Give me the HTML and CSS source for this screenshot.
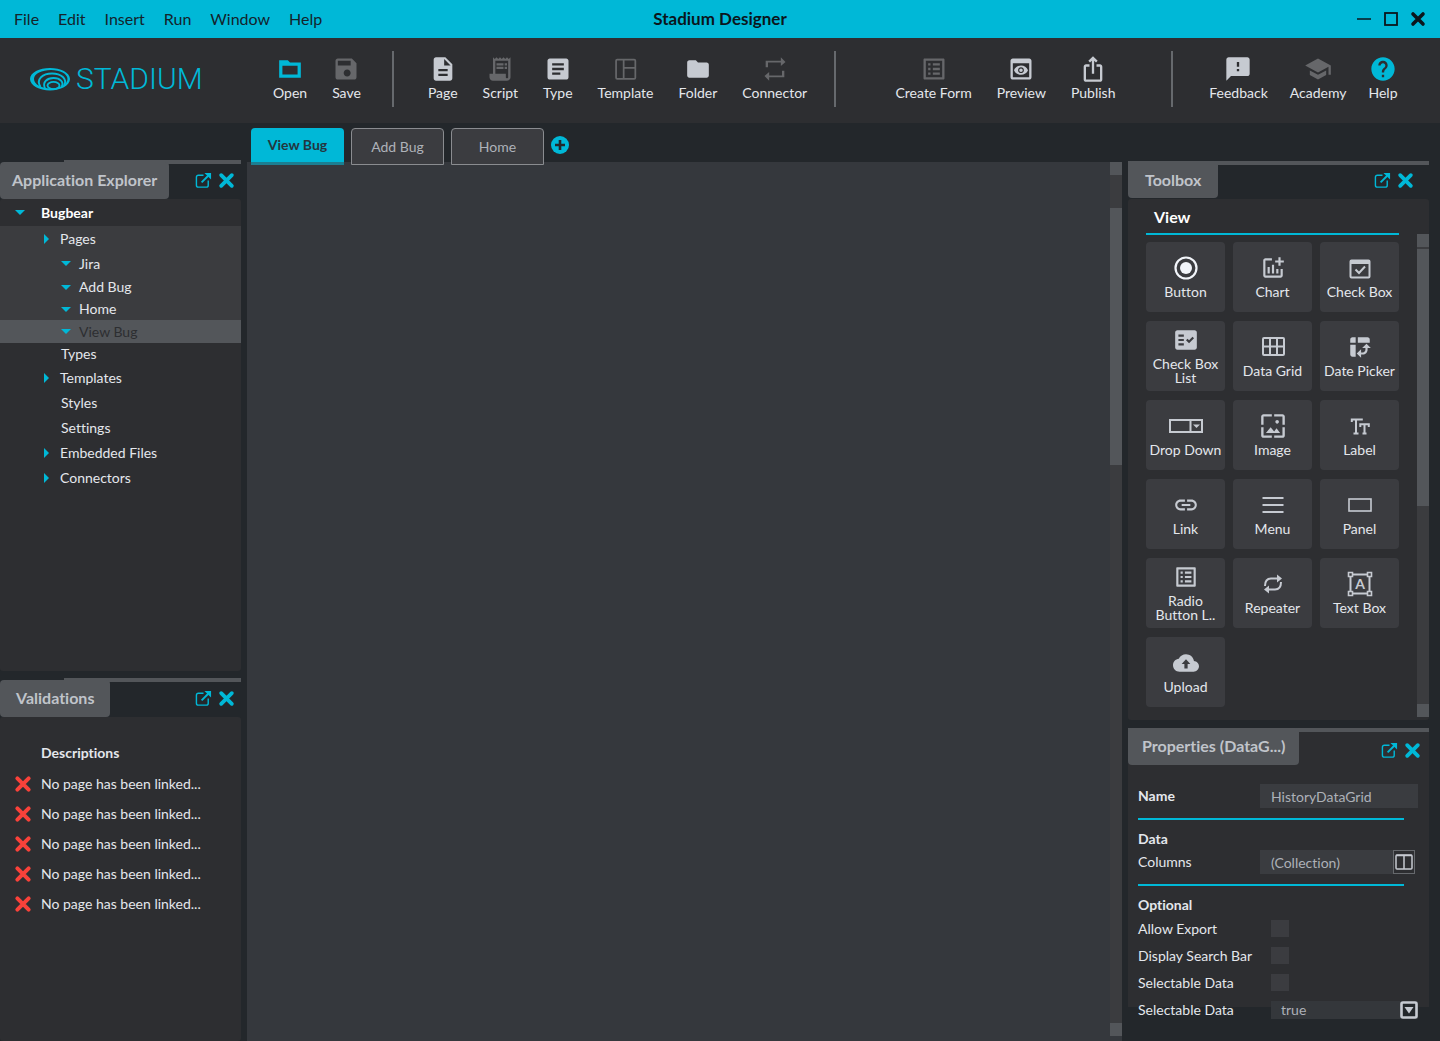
FILE: index.html
```
<!DOCTYPE html>
<html lang="en">
<head>
    <meta charset="UTF-8">
    <meta name="viewport" content="width=device-width, initial-scale=1.0">
    <title>Stadium Designer</title>
    <link rel="stylesheet" href="styles.css">
</head>
<body>

    <!-- Icons that are used more than once -->
    <svg class="sprite" aria-hidden="true">
        <symbol id="close" viewBox="0 0 16 16">
            <path d="M3 3l10 10M13 3L3 13" fill="none" stroke="currentColor" stroke-width="3.6" stroke-linecap="round"/>
        </symbol>
        <symbol id="popout" viewBox="0 0 18 18">
            <path d="M9 3.500H3.500a2 2 0 0 0-2 2v8.500a2 2 0 0 0 2 2h8.500a2 2 0 0 0 2-2V9" fill="none" stroke="currentColor" stroke-width="1.500"/>
            <path d="M7 11l7-7" fill="none" stroke="currentColor" stroke-width="2"/>
            <path d="M10 1h7v7z" fill="currentColor"/>
        </symbol>
        <symbol id="list" viewBox="0 0 24 24">
            <path d="M19 5v14H5V5h14m1.100-2H3.900c-.5 0-.9.4-.9.9v16.200c0 .4.4.9.9.9h16.200c.4 0 .9-.5.9-.9V3.900c0-.5-.5-.9-.9-.9zM11 7h6v2h-6zM11 11h6v2h-6zM11 15h6v2h-6zM7 7h2v2H7zM7 11h2v2H7zM7 15h2v2H7z" fill="currentColor"/>
        </symbol>
    </svg>

    <header class="titlebar">
        <nav class="menu">
            <button>File</button>
            <button>Edit</button>
            <button>Insert</button>
            <button>Run</button>
            <button>Window</button>
            <button>Help</button>
        </nav>
        <h1>Stadium Designer</h1>
        <div class="window-buttons">
            <button aria-label="Minimize"><svg viewBox="0 0 16 16"><path d="M1 8h14" stroke="currentColor" stroke-width="1.500"/></svg></button>
            <button aria-label="Maximize"><svg viewBox="0 0 16 16"><rect x="2" y="2" width="12" height="12" fill="none" stroke="currentColor" stroke-width="1.800"/></svg></button>
            <button aria-label="Close"><svg><use href="#close"/></svg></button>
        </div>
    </header>

    <div class="toolbar">
        <a class="logo" href="#">
            <svg viewBox="0 0 40 24" aria-hidden="true">
                <path d="M20 1C9.500 1 0 5.500 0 12s9.500 11.500 20 11.500S40 18.500 40 12 30.500 1 20 1zm1 2c9 0 16.500 3.800 16.500 9S30 21.500 21 21.500 4 17.500 4 12 12 3 21 3z" fill-rule="evenodd"/>
                <g fill="none" stroke="currentColor" stroke-width="1.900">
                    <path d="M10.500 20C5.500 12 13 6.500 22 6.500S38 12 34 18.500"/>
                    <path d="M15 21.500C12 15 17 11 23.500 11S34.500 15 31.500 20"/>
                    <ellipse cx="23.500" cy="18.500" rx="6" ry="3.600"/>
                </g>
            </svg>
            <span>STADIUM</span>
        </a>
        <div class="tool-group">
            <button class="tool"><svg class="small cyan" viewBox="0 0 24 24"><path d="M20 6h-8l-2-2H2v16h20V6zm-2 11H5V9h14v8z"/></svg>Open</button>
            <button class="tool"><svg class="dim" viewBox="0 0 24 24"><path d="M17 3H5c-1.110 0-2 .9-2 2v14c0 1.100.89 2 2 2h14c1.100 0 2-.9 2-2V7l-4-4zm-4 15.500c-1.660 0-3-1.340-3-3s1.340-3 3-3 3 1.340 3 3-1.340 3-3 3zm3-9.500H5V5h11v4z"/></svg>Save</button>
        </div>
        <div class="tool-group wide">
            <button class="tool"><svg viewBox="0 0 24 24"><path d="M14 2H6c-1.100 0-2 .9-2 2v16c0 1.100.9 2 2 2h12c1.100 0 2-.9 2-2V8l-6-6zm2 16H8v-2h8v2zm0-4H8v-2h8v2zm-3-5V3.500L18.500 9H13z"/></svg>Page</button>
            <button class="tool"><svg class="dim" viewBox="0 0 24 24"><path d="M19.500 3.500L18 2l-1.500 1.500L15 2l-1.500 1.500L12 2l-1.500 1.500L9 2 7.500 3.500 6 2v14H3v3c0 1.660 1.340 3 3 3h12c1.660 0 3-1.340 3-3V2l-1.500 1.500zM19 19c0 .55-.45 1-1 1s-1-.45-1-1v-3H8V5h11v14z"/><path d="M9 7h6v2H9zM16 7h2v2h-2zM9 10h6v2H9zM16 10h2v2h-2z"/></svg>Script</button>
            <button class="tool"><svg viewBox="0 0 24 24"><path d="M19 3H5c-1.100 0-2 .9-2 2v14c0 1.100.9 2 2 2h14c1.100 0 2-.9 2-2V5c0-1.100-.9-2-2-2zm-5 14H7v-2h7v2zm3-4H7v-2h10v2zm0-4H7V7h10v2z"/></svg>Type</button>
            <button class="tool"><svg class="dim line" viewBox="0 0 24 24"><rect x="3.500" y="4" width="16.500" height="16.500" rx="1"/><path d="M10 4v16.500M10 11h10"/></svg>Template</button>
            <button class="tool"><svg class="small" viewBox="0 0 24 24"><path d="M10 4H4c-1.100 0-2 .9-2 2v12c0 1.100.9 2 2 2h16c1.100 0 2-.9 2-2V8c0-1.100-.9-2-2-2h-8l-2-2z"/></svg>Folder</button>
            <button class="tool"><svg class="dim" viewBox="0 0 24 24"><path d="M6 6.500h11v3l4-3.500-4-4v3H4V10.500h2zM18 17.500H7v-3L3 18l4 4v-3h13v-5.500h-2z"/></svg>Connector</button>
        </div>
        <div class="tool-group page">
            <button class="tool"><svg class="dim"><use href="#list"/></svg>Create Form</button>
            <button class="tool"><svg viewBox="0 0 24 24"><path d="M19 3H5c-1.110 0-2 .9-2 2v14c0 1.100.89 2 2 2h14c1.100 0 2-.9 2-2V5c0-1.100-.89-2-2-2zm0 16H5V7h14v12zm-5.500-6c0 .83-.67 1.500-1.500 1.500s-1.500-.67-1.500-1.500.67-1.500 1.500-1.500 1.500.67 1.500 1.500zM12 9c-2.730 0-5.060 1.660-6 4 .94 2.340 3.270 4 6 4s5.060-1.660 6-4c-.94-2.340-3.270-4-6-4zm0 6.500c-1.380 0-2.500-1.120-2.500-2.500s1.120-2.500 2.500-2.500 2.500 1.120 2.500 2.500-1.120 2.500-2.500 2.500z"/></svg>Preview</button>
            <button class="tool"><svg viewBox="0 0 24 24"><path d="M16 5l-1.420 1.420-1.590-1.590V16h-1.980V4.830L9.420 6.420 8 5l4-4 4 4zm4 5v11c0 1.100-.9 2-2 2H6c-1.110 0-2-.9-2-2V10c0-1.110.89-2 2-2h3v2H6v11h12V10h-3V8h3c1.100 0 2 .89 2 2z"/></svg>Publish</button>
        </div>
        <div class="tool-group support">
            <button class="tool"><svg viewBox="0 0 24 24"><path d="M20 2H4c-1.100 0-2 .9-2 2v18l4-4h14c1.100 0 2-.9 2-2V4c0-1.100-.9-2-2-2zm-7 12h-2v-2h2v2zm0-4h-2V6h2v4z"/></svg>Feedback</button>
            <button class="tool"><svg class="dim" viewBox="0 0 24 24"><path d="M5 13.180v4L12 21l7-3.820v-4L12 17l-7-3.820zM12 3L1 9l11 6 9-4.910V17h2V9L12 3z"/></svg>Academy</button>
            <button class="tool"><svg class="cyan" viewBox="0 0 24 24"><path d="M12 2C6.480 2 2 6.480 2 12s4.480 10 10 10 10-4.480 10-10S17.520 2 12 2zm1 17h-2v-2h2v2zm2.070-7.750l-.9.92C13.450 12.900 13 13.500 13 15h-2v-.5c0-1.100.45-2.100 1.170-2.830l1.240-1.260c.37-.36.59-.86.59-1.410 0-1.100-.9-2-2-2s-2 .9-2 2H8c0-2.210 1.790-4 4-4s4 1.790 4 4c0 .88-.36 1.680-.93 2.250z"/></svg>Help</button>
        </div>
    </div>

    <main class="workspace">
        <aside class="side left">
            <section class="panel explorer">
                <div class="panel-head">
                    <h2>Application Explorer</h2>
                    <div class="panel-buttons">
                        <button aria-label="Pop out"><svg class="popout"><use href="#popout"/></svg></button>
                        <button aria-label="Close panel"><svg><use href="#close"/></svg></button>
                    </div>
                </div>
                <div class="panel-body">
                    <ul class="tree">
                        <li><button class="row root open">Bugbear</button>
                            <ul>
                                <li class="expanded"><button class="row closed">Pages</button>
                                    <ul>
                                        <li><button class="row leaf open">Jira</button></li>
                                        <li><button class="row leaf open tight">Add Bug</button></li>
                                        <li><button class="row leaf open tight">Home</button></li>
                                        <li><button class="row leaf open selected">View Bug</button></li>
                                    </ul>
                                </li>
                                <li><button class="row tight">Types</button></li>
                                <li><button class="row closed">Templates</button></li>
                                <li><button class="row">Styles</button></li>
                                <li><button class="row">Settings</button></li>
                                <li><button class="row closed">Embedded Files</button></li>
                                <li><button class="row closed">Connectors</button></li>
                            </ul>
                        </li>
                    </ul>
                </div>
            </section>

            <section class="panel validations">
                <div class="panel-head">
                    <h2>Validations</h2>
                    <div class="panel-buttons">
                        <button aria-label="Pop out"><svg class="popout"><use href="#popout"/></svg></button>
                        <button aria-label="Close panel"><svg><use href="#close"/></svg></button>
                    </div>
                </div>
                <div class="panel-body">
                    <h3>Descriptions</h3>
                    <ul class="errors">
                        <li><svg aria-hidden="true"><use href="#close"/></svg>No page has been linked...</li>
                        <li><svg aria-hidden="true"><use href="#close"/></svg>No page has been linked...</li>
                        <li><svg aria-hidden="true"><use href="#close"/></svg>No page has been linked...</li>
                        <li><svg aria-hidden="true"><use href="#close"/></svg>No page has been linked...</li>
                        <li><svg aria-hidden="true"><use href="#close"/></svg>No page has been linked...</li>
                    </ul>
                </div>
            </section>
        </aside>

        <section class="editor">
            <div class="tabs">
                <button class="tab active">View Bug</button>
                <button class="tab">Add Bug</button>
                <button class="tab">Home</button>
                <button class="add-tab" aria-label="New tab"><svg viewBox="0 0 18 18"><circle cx="9" cy="9" r="9" fill="currentColor"/><path d="M9 4v10M4 9h10" stroke="#23272b" stroke-width="2.600"/></svg></button>
            </div>
            <div class="canvas">
                <div class="scrollbar"><span class="arrow"></span><span class="thumb"></span><span class="arrow end"></span></div>
            </div>
        </section>

        <aside class="side right">
            <section class="panel toolbox">
                <div class="panel-head">
                    <h2>Toolbox</h2>
                    <div class="panel-buttons">
                        <button aria-label="Pop out"><svg class="popout"><use href="#popout"/></svg></button>
                        <button aria-label="Close panel"><svg><use href="#close"/></svg></button>
                    </div>
                </div>
                <div class="panel-body">
                    <div class="controls">
                        <h3>View</h3>
                        <div class="tiles">
                            <button class="tile bright"><svg class="line" viewBox="0 0 26 26"><circle cx="13" cy="13" r="10.500" stroke-width="2.200"/><circle cx="13" cy="13" r="6" fill="currentColor" stroke="none"/></svg>Button</button>
                            <button class="tile"><svg viewBox="0 0 24 24"><path d="M22 5v2h-3v3h-2V7h-3V5h3V2h2v3h3zm-3 14H5V5h6V3H5c-1.100 0-2 .9-2 2v14c0 1.100.9 2 2 2h14c1.100 0 2-.9 2-2v-6h-2v6zm-4-6v4h2v-4h-2zm-4 4h2V9h-2v8zm-2 0v-6H7v6h2z"/></svg>Chart</button>
                            <button class="tile"><svg class="line" viewBox="0 0 26 26"><rect x="3.500" y="5.500" width="19" height="17" rx="1"/><path d="M3 7h20" stroke-width="4"/><path d="M8.500 14.500l3.500 3.500 6-6.500"/></svg>Check Box</button>
                            <button class="tile"><svg viewBox="0 0 24 24"><path d="M20 3H4c-1.100 0-2 .9-2 2v14c0 1.100.9 2 2 2h16c1.100 0 2-.9 2-2V5c0-1.100-.9-2-2-2zM10 17H5v-2h5v2zm0-4H5v-2h5v2zm0-4H5V7h5v2zm4.820 6L12 12.160l1.410-1.410 1.410 1.420L17.990 9l1.420 1.420L14.820 15z"/></svg>Check Box List</button>
                            <button class="tile"><svg class="line" viewBox="0 0 26 26"><rect x="3" y="4" width="21" height="17" rx="1"/><path d="M10 4v17M17 4v17M3 12.500h21"/></svg>Data Grid</button>
                            <button class="tile"><svg viewBox="0 0 24 24"><path d="M10 8h11V5c0-1.100-.9-2-2-2h-9v5zM3 8h5V3H5c-1.100 0-2 .9-2 2v3zm2 13h3V10H3v9c0 1.100.9 2 2 2zm8 1l-4-4 4-4zm1-9l4-4 4 4zm.58 6H13v-2h1.580c1.330 0 2.420-1.080 2.420-2.420V13h2v1.580c0 2.440-1.980 4.420-4.420 4.420z"/></svg>Date Picker</button>
                            <button class="tile"><svg class="line broad" viewBox="0 0 36 26"><path d="M2 7h32v12H2zM22.500 7v12"/><path d="M25 11.500h7L28.500 15z" fill="currentColor" stroke="none"/></svg>Drop Down</button>
                            <button class="tile"><svg viewBox="1 1 22 22"><path d="M4 4h7V2H4c-1.100 0-2 .9-2 2v7h2V4zm6 9l-4 5h12l-3-4-2.030 2.710L10 13zm7-4.500c0-.83-.67-1.500-1.500-1.500S14 7.670 14 8.500s.67 1.500 1.500 1.500S17 9.330 17 8.500zM20 2h-7v2h7v7h2V4c0-1.100-.9-2-2-2zm0 18h-7v2h7c1.100 0 2-.9 2-2v-7h-2v7zM4 13H2v7c0 1.100.9 2 2 2h7v-2H4v-7z"/></svg>Image</button>
                            <button class="tile"><svg class="line" viewBox="0 0 26 26"><path d="M4.800 9V6.500h11M9 6.500v14M6.500 20.500h5M13.300 14v-2.700h8.500V14M17.500 11.300v9.200M15.500 20.500h4"/></svg>Label</button>
                            <button class="tile"><svg viewBox="0 0 24 24"><path d="M3.900 12c0-1.710 1.390-3.100 3.100-3.100h4V7H7c-2.760 0-5 2.240-5 5s2.240 5 5 5h4v-1.900H7c-1.710 0-3.100-1.390-3.100-3.100zM8 13h8v-2H8v2zm9-6h-4v1.900h4c1.710 0 3.100 1.390 3.100 3.100s-1.390 3.100-3.100 3.100h-4V17h4c2.760 0 5-2.240 5-5s-2.240-5-5-5z"/></svg>Link</button>
                            <button class="tile"><svg class="line" viewBox="0 0 26 26"><path d="M2.500 6h21M2.500 13h21M2.500 20h21"/></svg>Menu</button>
                            <button class="tile"><svg class="line" viewBox="0 0 26 26"><rect x="2" y="7" width="22" height="12" stroke-width="1.600"/></svg>Panel</button>
                            <button class="tile"><svg><use href="#list"/></svg>Radio Button L..</button>
                            <button class="tile"><svg class="line" viewBox="0 0 26 26"><path d="M5 15c0-5 2-7.500 6-7.500h8M21 11c0 5-2 7.500-6 7.500H7"/><path d="M17 3.500l5 4-5 4zM9 14.500l-5 4 5 4z" fill="currentColor" stroke="none"/></svg>Repeater</button>
                            <button class="tile"><svg class="line" viewBox="0 0 26 26"><path d="M5 3.500h16M5 22.500h16M3.500 5v16M22.500 5v16"/><path d="M1.500 1.500h4v4h-4zM20.500 1.500h4v4h-4zM1.500 20.500h4v4h-4zM20.500 20.500h4v4h-4z" class="knob"/><text x="13" y="18" text-anchor="middle">A</text></svg>Text Box</button>
                            <button class="tile"><svg viewBox="0 0 24 24"><path d="M19.350 10.040C18.670 6.590 15.640 4 12 4 9.110 4 6.600 5.640 5.350 8.040 2.340 8.360 0 10.910 0 14c0 3.310 2.690 6 6 6h13c2.760 0 5-2.240 5-5 0-2.640-2.050-4.780-4.650-4.960zM13.500 13v4h-3v-4H8l4-4.500 4 4.500z"/></svg>Upload</button>
                        </div>
                    </div>
                    <div class="scrollbar"><span class="arrow"></span><span class="thumb"></span><span class="arrow end"></span></div>
                </div>
            </section>

            <section class="panel properties">
                <div class="panel-head">
                    <h2>Properties (DataG...)</h2>
                    <div class="panel-buttons">
                        <button aria-label="Pop out"><svg class="popout"><use href="#popout"/></svg></button>
                        <button aria-label="Close panel"><svg><use href="#close"/></svg></button>
                    </div>
                </div>
                <form class="props">
                    <div class="prop name">
                        <label for="name"><b>Name</b></label>
                        <input type="text" id="name" value="HistoryDataGrid">
                    </div>
                    <hr>
                    <h3>Data</h3>
                    <div class="prop columns">
                        <label for="columns">Columns</label>
                        <input type="text" id="columns" value="(Collection)">
                        <button type="button" aria-label="Edit columns"><svg class="line" viewBox="0 0 18 16"><rect x="1" y="1" width="16" height="14" rx="1"/><path d="M9 1v14M1 1.500h16"/></svg></button>
                    </div>
                    <hr>
                    <h3>Optional</h3>
                    <div class="prop option">
                        <label for="export">Allow Export</label>
                        <input type="checkbox" id="export">
                    </div>
                    <div class="prop option">
                        <label for="search">Display Search Bar</label>
                        <input type="checkbox" id="search">
                    </div>
                    <div class="prop option">
                        <label for="selectable">Selectable Data</label>
                        <input type="checkbox" id="selectable">
                    </div>
                    <div class="prop option">
                        <label for="selectable-value">Selectable Data</label>
                        <div class="select">
                            <select id="selectable-value">
                                <option>true</option>
                                <option>false</option>
                            </select>
                            <svg viewBox="0 0 18 18" aria-hidden="true"><rect x="1.500" y="1.500" width="15" height="15" rx="1.500" fill="#23272b" stroke="currentColor" stroke-width="2.600"/><path d="M4.500 6h9L9 12.500z" fill="currentColor"/></svg>
                        </div>
                    </div>
                </form>
            </section>
        </aside>
    </main>

</body>
</html>
```
FILE: styles.css
```
*, *::before {
    box-sizing: border-box;
}
body {
    display: flex;
    flex-direction: column;
    min-height: 100vh;
    margin: 0;
    background-color: #23272b;
    color: #e4e7ec;
    font-family: Muli, Lato, "Open Sans", sans-serif;
    font-size: 14px;
    font-variant-ligatures: none;
    line-height: 20px;
}
h1, h2, h3, ul {
    margin: 0;
    padding: 0;
}
ul {
    list-style: none;
}
button {
    padding: 0;
    border: none;
    background: none;
    color: inherit;
    font: inherit;
    font-variant-ligatures: none;
    cursor: pointer;
}
svg {
    display: block;
    fill: currentColor;
}
.sprite {
    position: absolute;
    width: 0;
    height: 0;
}
.line {
    fill: none;
    stroke: currentColor;
    stroke-width: 2;
}

/* Title bar */
.titlebar {
    display: grid;
    grid-template-columns: 1fr auto 1fr;
    align-items: center;
    height: 38px;
    padding: 0 14px;
    background-color: #00b8d7;
    color: #14232b;
}
.titlebar h1 {
    font-size: 17px;
    color: #0b161c;
}
.menu {
    display: flex;
    gap: 19px;
    font-size: 16px;
}
.window-buttons {
    display: flex;
    justify-content: flex-end;
    gap: 11px;
    color: #0b161c;
}
.window-buttons svg {
    width: 16px;
    height: 16px;
}

/* Toolbar */
.toolbar {
    display: grid;
    grid-template-columns: 247px 147fr 442fr 338fr 267fr;
    align-items: center;
    height: 85px;
    padding-bottom: 4px;
    background-color: #2d2e31;
}
.logo {
    display: flex;
    align-items: center;
    gap: 6px;
    padding-left: 30px;
    color: #00b8d7;
    font-family: Roboto, sans-serif;
    font-size: 30px;
    font-weight: 300;
    text-decoration: none;
}
.logo svg {
    width: 40px;
    height: 24px;
}
.tool-group {
    display: flex;
    gap: 25px;
    height: 56px;
    padding-left: 26px;
    border-right: 2px solid #66696d;
}
.tool-group.wide {
    padding-left: 34px;
}
.tool-group.page {
    padding-left: 60px;
}
.tool-group.support {
    gap: 22px;
    padding-left: 36px;
    border-right: none;
}
.tool {
    display: flex;
    flex-direction: column;
    align-items: center;
    padding-top: 4px;
    white-space: nowrap;
}
.tool svg {
    width: 28px;
    height: 28px;
    color: #c6cad1;
}
.tool svg.small {
    width: 26px;
}
.tool svg.dim {
    color: #66676a;
}
.tool svg.cyan {
    color: #00b8d7;
}
.tool svg.line {
    stroke-width: 1.5;
}

/* Workspace */
.workspace {
    flex: 1;
    display: grid;
    grid-template-columns: 241px 1fr 301px;
    column-gap: 6px;
    padding-right: 11px;
}
.side {
    display: flex;
    flex-direction: column;
    gap: 7px;
    padding-top: 38px;
}
.side.left {
    padding-top: 37px;
}
.panel {
    display: flex;
    flex-direction: column;
}
.panel-head {
    display: flex;
    justify-content: space-between;
    align-items: flex-start;
    height: 38px;
    background: linear-gradient(#53565a, #53565a) 0 0 / 100% 4px no-repeat;
}
.left .panel-head {
    height: 39px;
    background-position: 64px 0;
    padding-top: 2px;
}
.panel-head h2 {
    height: 37px;
    padding: 8px 12px;
    border-radius: 4px;
    background-color: #53565a;
    color: #c0c4ca;
    font-size: 16px;
    line-height: 19px;
}
.validations h2 {
    padding: 8px 16px;
}
.toolbox h2 {
    padding: 9px 17px;
}
.properties h2 {
    padding: 8px 14px;
}
.panel-buttons {
    display: flex;
    align-items: center;
    gap: 6px;
    padding: 10px 6px 0 0;
    color: #00b8d7;
}
.right .panel-buttons {
    padding: 11px 15px 0 0;
}
.right .properties .panel-buttons {
    padding: 14px 8px 0 0;
}
.panel-buttons svg {
    width: 17px;
    height: 17px;
}
.panel-body {
    flex: 1;
    border-radius: 3px;
    background-color: #2d2e31;
}

/* Application explorer */
.explorer {
    flex: 510 0 0;
}
.validations {
    flex: 363 0 0;
}
.row {
    display: flex;
    align-items: center;
    width: 100%;
    height: 25px;
    padding-left: 44px;
}
.row::before {
    content: "";
    width: 17px;
}
.row.closed::before {
    width: 5px;
    margin-right: 11px;
    border: solid transparent;
    border-width: 5px 0 5px 5px;
    border-left-color: #00b8d7;
}
.row.open::before {
    width: 10px;
    margin-right: 8px;
    border: solid transparent;
    border-width: 5px 5px 0;
    border-top-color: #00b8d7;
}
.row.root {
    height: 27px;
    padding-left: 15px;
    color: #ffffff;
    font-weight: bold;
}
.row.root::before {
    margin-right: 16px;
}
.row.leaf {
    padding-left: 61px;
}
.row.tight {
    height: 22px;
}
.expanded {
    background-color: #3b3c3f;
}
.row.selected {
    height: 23px;
    background-color: #53565a;
    color: #2d2e31;
}

/* Validations */
.validations h3 {
    padding: 26px 0 6px 41px;
    font-size: 14px;
}
.errors li {
    display: flex;
    align-items: center;
    gap: 9px;
    height: 30px;
    padding-left: 14px;
}
.errors svg {
    width: 18px;
    height: 18px;
    color: #f9423a;
}

/* Editor */
.editor {
    display: flex;
    flex-direction: column;
}
.tabs {
    display: flex;
    gap: 7px;
    height: 39px;
    padding: 5px 4px 0;
}
.tab {
    position: relative;
    width: 93px;
    height: 37px;
    border: 1px solid #8a8c90;
    border-radius: 4px 4px 0 0;
    background-color: #3b3c40;
    color: #aeb2b9;
}
.tab.active {
    border: none;
    border-bottom: 3px solid #1c7f92;
    background-color: #00b8d7;
    color: #23363f;
    font-weight: bold;
}
.add-tab {
    align-self: center;
    color: #00b8d7;
}
.add-tab svg {
    width: 18px;
    height: 18px;
}
.canvas {
    flex: 1;
    display: flex;
    justify-content: flex-end;
    background-color: #35383d;
}
.canvas .scrollbar {
    padding-bottom: 5px;
}

/* Scroll bars */
.scrollbar {
    display: flex;
    flex-direction: column;
    width: 12px;
    background: #3b3c3f content-box;
}
.scrollbar .arrow {
    height: 13px;
    background-color: #53565a;
}
.scrollbar .thumb {
    height: 257px;
    background-color: #53565a;
}
.scrollbar .end {
    margin-top: auto;
}
.canvas .thumb {
    margin-top: 33px;
}
.toolbox .thumb {
    margin-top: 2px;
}

/* Toolbox */
.side.right {
    gap: 8px;
}
.toolbox .panel-body {
    display: flex;
    justify-content: space-between;
    padding-left: 18px;
}
.controls {
    width: 253px;
    padding: 8px 0 13px;
}
.controls h3 {
    padding: 0 8px 6px;
    border-bottom: 2px solid #00b8d7;
    color: #ffffff;
    font-size: 16px;
}
.tiles {
    display: grid;
    grid-template-columns: repeat(3, 1fr);
    grid-auto-rows: 70px;
    gap: 9px 8px;
    padding-top: 7px;
}
.tile {
    display: flex;
    flex-direction: column;
    align-items: center;
    justify-content: center;
    gap: 4px;
    border-radius: 4px;
    background-color: #3b3c40;
    line-height: 14px;
}
.tile svg {
    flex: none;
    width: 26px;
    height: 26px;
    color: #c6cad1;
}
.tile svg.broad {
    width: 36px;
}
.tile.bright svg {
    color: #f2f5fa;
}
.tile .knob {
    fill: #3b3c40;
    stroke-width: 1.6;
}
.tile text {
    fill: currentColor;
    stroke: none;
    font-size: 14px;
    font-weight: bold;
}
.toolbox .scrollbar {
    padding: 35px 0 3px;
}

/* Properties */
.properties {
    flex: 1;
    background: linear-gradient(#2d2e31, #2d2e31) 0 0 / 100% calc(100% - 34px) no-repeat;
}
.props {
    padding: 17px 11px 0 10px;
}
.props h3 {
    font-size: 14px;
}
.props hr {
    height: 2px;
    margin: 9px 14px 9px 0;
    border: none;
    background-color: #00b8d7;
}
.prop {
    display: flex;
    align-items: center;
    height: 26px;
}
.prop label {
    width: 122px;
    white-space: nowrap;
}
.prop input[type="text"] {
    flex: 1;
    min-width: 0;
    height: 24px;
    padding: 0 11px;
    border: none;
    background-color: #3a3c40;
    color: #adb1b8;
    font: inherit;
    font-variant-ligatures: none;
}
.columns {
    padding-right: 3px;
}
.columns button {
    width: 22px;
    height: 24px;
    padding: 0 1px;
    border: 1px solid #66696d;
    color: #c6cad1;
}
.columns svg {
    width: 18px;
    height: 16px;
}
.columns .line {
    stroke-width: 1.5;
}
.prop.option {
    height: 27px;
}
.option label {
    width: 133px;
}
.option input {
    appearance: none;
    width: 18px;
    height: 17px;
    margin: 0;
    background-color: #3b3c40;
}
.select {
    flex: 1;
    display: flex;
    align-items: center;
    background-color: #34373b;
}
.select select {
    flex: 1;
    height: 17px;
    padding: 0 10px;
    border: none;
    appearance: none;
    background: none;
    color: #adb1b8;
    font: inherit;
    line-height: 17px;
}
.select svg {
    width: 18px;
    height: 18px;
    color: #c6cad1;
    pointer-events: none;
}
```
